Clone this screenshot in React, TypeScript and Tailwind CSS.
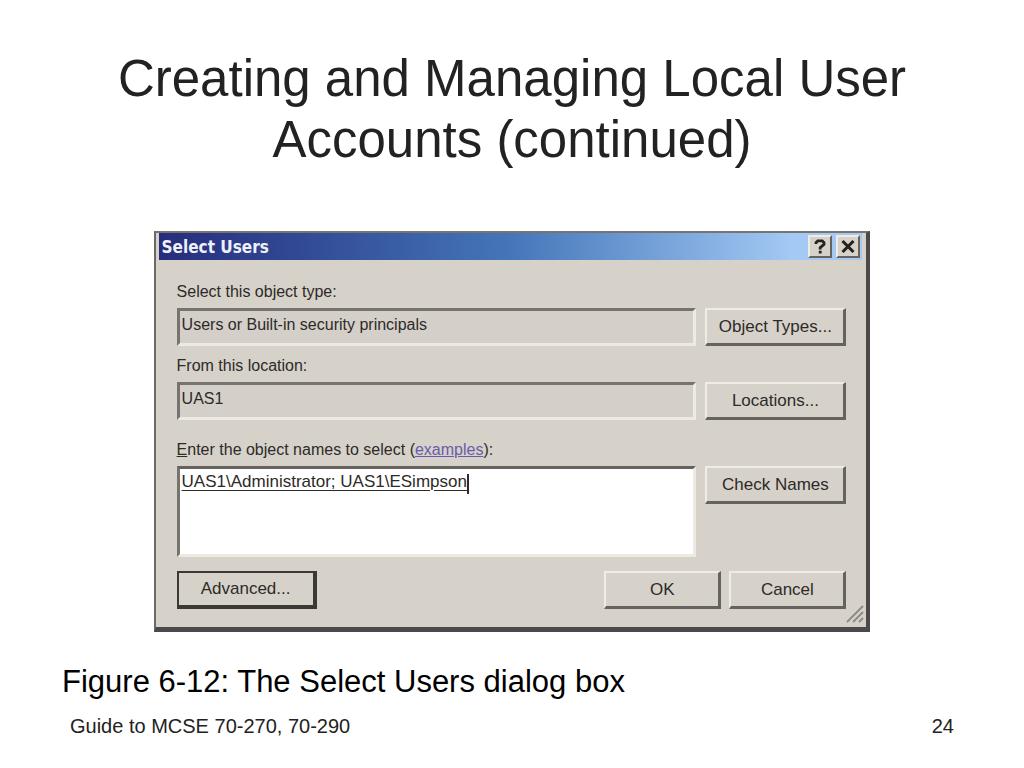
import { useState } from "react";
import type { ReactNode } from "react";

interface DialogButtonProps {
  children: ReactNode;
  className?: string;
}

function DialogButton({ children, className = "w-full" }: DialogButtonProps) {
  return (
    <button
      type="button"
      className={`h-[38px] shrink-0 border-t-2 border-l-2 border-r-3 border-b-3 border-t-[#efece6] border-l-[#efece6] border-r-[#66625d] border-b-[#66625d] bg-[#d6d2ca] text-center text-[17px] leading-6 ${className}`}
    >
      {children}
    </button>
  );
}

interface ReadOnlyFieldProps {
  id: string;
  label: string;
  value: string;
  action: string;
}

function ReadOnlyField({ id, label, value, action }: ReadOnlyFieldProps) {
  return (
    <div>
      <label htmlFor={id} className="block h-7 leading-6">
        {label}
      </label>
      <div className="flex gap-[9px]">
        <input
          id={id}
          readOnly
          value={value}
          className="h-[38px] min-w-0 flex-1 border-3 border-t-[#77736e] border-l-[#77736e] border-r-[#edeae4] border-b-[#edeae4] bg-[#d4d0c9] px-[2px] pb-1 outline-none"
        />
        <div className="w-[141px]">
          <DialogButton>{action}</DialogButton>
        </div>
      </div>
    </div>
  );
}

function TitleBar() {
  return (
    <div className="flex bg-[#d6d2ca] pr-1 pl-[3px]">
      <div className="flex h-[27px] flex-1 items-center justify-between bg-linear-to-r from-[#262c7c] via-[#4576b9] via-50% to-[#a3c9f4] to-90% pr-[2px] pl-[3px]">
        <h2 className="font-['DejaVu_Sans_Condensed','DejaVu_Sans',sans-serif] text-[17px] leading-6 font-bold text-[#eef0f8]">
          Select Users
        </h2>
        <div className="flex gap-1">
          <button
            type="button"
            aria-label="Help"
            className="flex h-[23px] w-6 items-center justify-center border-2 border-t-[#efece6] border-l-[#efece6] border-r-[#66625d] border-b-[#66625d] bg-[#d6d2ca]"
          >
            <svg viewBox="0 0 12 15" className="h-[15px] w-3" fill="none" stroke="#24211f" strokeWidth="2.8">
              <path d="M2 5V3.6L3.8 1.8h4.4L10 3.6v1.8L6.2 8.6v2M6.2 11.8v2.8" />
            </svg>
          </button>
          <button
            type="button"
            aria-label="Close"
            className="flex h-[23px] w-6 items-center justify-center border-2 border-t-[#efece6] border-l-[#efece6] border-r-[#66625d] border-b-[#66625d] bg-[#d6d2ca]"
          >
            <svg viewBox="0 0 14 13" className="h-[13px] w-[14px]" fill="none" stroke="#24211f" strokeWidth="3">
              <path d="M1.5 1l11 11M12.5 1l-11 11" />
            </svg>
          </button>
        </div>
      </div>
    </div>
  );
}

function SelectUsersDialog() {
  const [names, setNames] = useState("UAS1\\Administrator; UAS1\\ESimpson");

  return (
    <section
      aria-label="Select Users"
      className="relative mx-auto w-[70%] border-t-2 border-r-4 border-b-5 border-l-2 border-t-[#77746f] border-r-[#4b4a48] border-b-[#4b4a48] border-l-[#6b6966] bg-[#d6d2ca] font-['Liberation_Sans',Arial,sans-serif] text-base text-[#2d2a28]"
    >
      <TitleBar />
      <div className="pt-5 pr-5 pb-[18px] pl-[21px]">
        <ReadOnlyField id="object-type" label="Select this object type:" value="Users or Built-in security principals" action="Object Types..." />
        <div className="mt-2">
          <ReadOnlyField id="location" label="From this location:" value="UAS1" action="Locations..." />
        </div>

        {/* Object names */}
        <div className="mt-[18px]">
          <div className="h-7 leading-6">
            <label htmlFor="object-names">
              <span className="underline">E</span>nter the object names to select
            </label>{" "}
            (
            <a href="#examples" className="text-[#6a5cab] underline">
              examples
            </a>
            ):
          </div>
          <div className="flex items-start gap-[9px]">
            <div className="relative min-w-0 flex-1">
              <textarea
                id="object-names"
                value={names}
                onChange={(e) => setNames(e.target.value)}
                className="block h-[91px] w-full resize-none border-3 border-t-[#66625d] border-l-[#77736e] border-r-[#edeae4] border-b-[#edeae4] bg-white px-[2px] pt-px text-[17px] leading-6 underline underline-offset-3 outline-none"
              />
              {/* Text cursor */}
              <span className="absolute top-2 left-[290px] h-5 w-[2px] bg-[#2d2a28]" />
            </div>
            <div className="w-[141px]">
              <DialogButton>Check Names</DialogButton>
            </div>
          </div>
        </div>

        {/* Footer buttons */}
        <div className="mt-[14px] flex justify-between">
          <button
            type="button"
            className="h-[38px] w-[140px] border-2 border-r-4 border-b-4 border-[#3c3834] bg-[#d6d2ca] text-[17px] leading-6"
          >
            Advanced...
          </button>
          <div className="flex gap-2">
            <DialogButton className="w-[117px]">OK</DialogButton>
            <DialogButton className="w-[117px]">Cancel</DialogButton>
          </div>
        </div>
      </div>
      <svg viewBox="0 0 18 18" className="absolute right-[2px] bottom-1 h-[18px] w-[18px]" fill="none" stroke="#8d8983" strokeWidth="1.8">
        <path d="M1 17L17 1M7 17L17 7M13 17l4-4" />
      </svg>
    </section>
  );
}

export default function App() {
  return (
    <main className="min-h-screen bg-white pt-12 font-['Liberation_Sans',Arial,sans-serif] text-[#222222]">
      <h1 className="mx-auto max-w-[860px] text-center text-[51px] leading-[61px]">
        Creating and Managing Local User Accounts (continued)
      </h1>
      <div className="mt-[61px]">
        <SelectUsersDialog />
      </div>
      <p className="mt-8 px-[62px] text-[31px] leading-9 text-black">Figure 6-12: The Select Users dialog box</p>
      <footer className="mt-3 flex justify-between px-[70px] text-xl leading-7">
        <span>Guide to MCSE 70-270, 70-290</span>
        <span>24</span>
      </footer>
    </main>
  );
}
